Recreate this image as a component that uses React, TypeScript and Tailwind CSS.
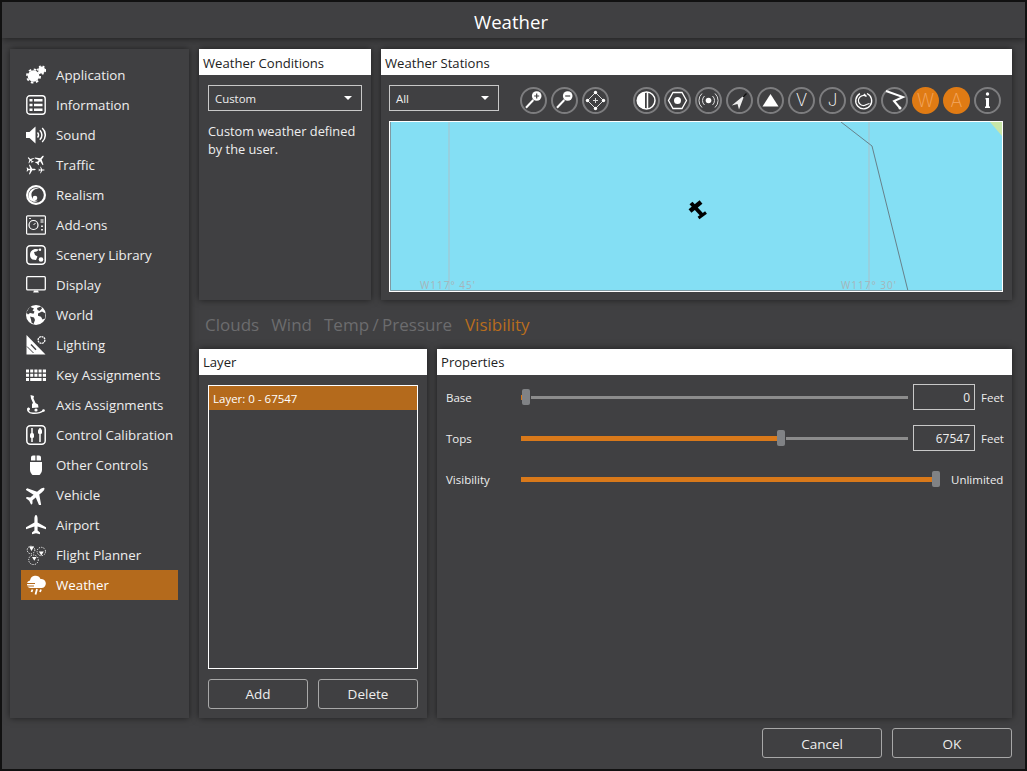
import type { ReactNode } from "react";

const PLANE =
  "M10 0C11 0 11.6 2 11.6 4V7.4L20 12.2V14.2L11.6 11.6V15.6L14 17.6V19.2L10 18.2L6 19.2V17.6L8.4 15.6V11.6L0 14.2V12.2L8.4 7.4V4C8.4 2 9 0 10 0Z";

function Svg({ children }: { children: ReactNode }) {
  return (
    <svg viewBox="0 0 20 20" className="h-5 w-5 shrink-0" fill="none" stroke="none">
      {children}
    </svg>
  );
}

function MiniPlane({ x, y, s, r }: { x: number; y: number; s: number; r: number }) {
  return <path d={PLANE} fill="#fff" transform={`translate(${x} ${y}) rotate(${r}) scale(${s}) translate(-10 -10)`} />;
}

const icons: Record<string, ReactNode> = {
  Application: (
    <Svg>
      <circle cx="7.5" cy="11" r="5.8" fill="#fff" />
      <circle cx="7.5" cy="11" r="6.6" stroke="#fff" strokeWidth="1.8" strokeDasharray="2.6 2.6" />
      <circle cx="15.6" cy="5" r="3.4" fill="#fff" />
      <circle cx="15.6" cy="5" r="3.9" stroke="#fff" strokeWidth="1.4" strokeDasharray="1.9 1.9" />
    </Svg>
  ),
  Information: (
    <Svg>
      <rect x="0.8" y="0.8" width="18.4" height="18.4" rx="3" stroke="#fff" strokeWidth="1.4" />
      <path d="M3.5 4h3v2.6h-3zM8 4h8.5v2.6H8zM3.5 8.7h3v2.6h-3zM8 8.7h8.5v2.6H8zM3.5 13.4h3V16h-3zM8 13.4h8.5V16H8z" fill="#fff" />
    </Svg>
  ),
  Sound: (
    <Svg>
      <path d="M0 7h3.5L9.5 1.5v17L3.5 13H0z" fill="#fff" />
      <path d="M11.5 7.5a3.5 3.5 0 0 1 0 5M13.8 5.2a6.5 6.5 0 0 1 0 9.6M16.2 3a9.5 9.5 0 0 1 0 14" stroke="#fff" strokeWidth="1.5" />
    </Svg>
  ),
  Traffic: (
    <Svg>
      <MiniPlane x={4.5} y={5} s={0.36} r={-45} />
      <MiniPlane x={14} y={5} s={0.55} r={40} />
      <MiniPlane x={5} y={14.5} s={0.48} r={90} />
      <MiniPlane x={15.5} y={15} s={0.32} r={90} />
    </Svg>
  ),
  Realism: (
    <Svg>
      <circle cx="10" cy="10" r="10" fill="#fff" />
      <circle cx="10" cy="10" r="7.8" fill="#404042" />
      <path d="M2.5 11c0-4.500 3.5-8 8-8 1 0 2 .2 2.8.6C8 3.5 5 7 5.5 10.5 6 14 9 16 12 15.800c-1 .7-2 1-3 1-3.500 0-6.500-2.500-6.500-5.800z" fill="#fff" />
      <circle cx="9" cy="13" r="2.3" fill="#fff" />
    </Svg>
  ),
  "Add-ons": (
    <Svg>
      <rect x="0.6" y="0.8" width="18.8" height="18.4" rx="1" stroke="#fff" strokeWidth="1.2" />
      <circle cx="7.5" cy="10" r="4.5" stroke="#fff" strokeWidth="1.2" />
      <path d="M7.5 10L9.5 8" stroke="#fff" />
      <path d="M14.5 4h3v4h-3z" fill="#aaa" />
      <path d="M15 10.500h2v1.500h-2zM15 14h2v1.500h-2zM3 3h2v1H3z" fill="#ddd" />
    </Svg>
  ),
  "Scenery Library": (
    <Svg>
      <rect x="0.8" y="0.8" width="18.4" height="18.4" rx="3.5" stroke="#fff" strokeWidth="1.5" />
      <path d="M4 10c0-3.500 2.500-6 6-6 1 0 2 .2 3 .8L10.500 6.500 8 7l1 3 2.500 1.500L10 15 6.500 14.500C5 13.500 4 12 4 10z" fill="#fff" />
      <circle cx="15" cy="14.5" r="2.3" fill="#fff" />
      <circle cx="14" cy="4.8" r="1.2" fill="#fff" />
    </Svg>
  ),
  Display: (
    <Svg>
      <rect x="0.7" y="1.7" width="18.6" height="13.2" rx="1" stroke="#fff" strokeWidth="1.3" />
      <path d="M8 15.500h4l.8 2H7.200z" fill="#fff" />
    </Svg>
  ),
  World: (
    <Svg>
      <circle cx="10" cy="10" r="10" fill="#fff" />
      <path d="M4 1.800L8 3.500 6.500 5.500 8.500 6.500 7.500 8.800 4 8 2 9.500.3 7.500zM11 3l4-1.500 1 2-2.500 2.500L11.500 5zM12 8.500l4-2 3.500 2-.5 5-2.500 1-1.500-2.800-3-1zM4 11.500l4 1 1 2.500-1.500 4-2-1.500-.5-3z" fill="#404042" />
    </Svg>
  ),
  Lighting: (
    <Svg>
      <circle cx="15.5" cy="5" r="3.4" stroke="#fff" strokeWidth="1.3" strokeDasharray="2 .6" />
      <path d="M0.5 0L19.5 19.5H0.5z" fill="#fff" />
      <path d="M5 9.500L10 14.800" stroke="#404042" strokeWidth="1.3" />
      <path d="M1 11.500L7.500 18" stroke="#404042" strokeWidth="1" />
    </Svg>
  ),
  "Key Assignments": (
    <Svg>
      <path d="M0 4.500h3v3H0zM4.200 4.500h3v3h-3zM8.400 4.500h3v3h-3zM12.600 4.500h3v3h-3zM16.800 4.500H20v3h-3.200zM0 8.700h3v3H0zM4.200 8.700h3v3h-3zM8.400 8.700h3v3h-3zM12.600 8.700h3v3h-3zM16.800 8.700H20v3h-3.200zM0 12.900h3v3H0zM4.200 12.900h11.400v3H4.200zM16.800 12.900H20v3h-3.200z" fill="#fff" />
    </Svg>
  ),
  "Axis Assignments": (
    <Svg>
      <path d="M4.500 0L8 1 7.500 3.500 9.500 8 12 9.500 12.500 12.500 6 13 6 9 7 8 5 3.500z" fill="#fff" />
      <path d="M3 13c-2 2-1 5 4 5.200 4 .2 8-.7 11-3" stroke="#fff" strokeWidth="1.4" />
      <circle cx="2.5" cy="14" r="1.5" fill="#fff" />
      <circle cx="17.5" cy="15.5" r="1.3" fill="#fff" />
      <circle cx="10" cy="15" r="1.6" fill="#fff" />
    </Svg>
  ),
  "Control Calibration": (
    <Svg>
      <rect x="0.8" y="0.8" width="18.4" height="18.4" rx="3.5" stroke="#fff" strokeWidth="1.5" />
      <path d="M6 3v14M14 3v14" stroke="#fff" strokeWidth="1.5" />
      <rect x="4" y="8" width="4" height="5" rx="1.5" fill="#fff" />
      <rect x="12" y="4" width="4" height="5" rx="1.5" fill="#fff" />
    </Svg>
  ),
  "Other Controls": (
    <Svg>
      <path d="M4 7h12v8a6 6 0 0 1-12 0z" fill="#fff" />
      <path d="M5 5.600V2.500A2 2 0 0 1 7 .5h2.400v5.100zM10.600 5.600V.5H13a2 2 0 0 1 2 2v3.100z" fill="#fff" />
    </Svg>
  ),
  Vehicle: (
    <Svg>
      <MiniPlane x={10} y={10} s={1.08} r={50} />
    </Svg>
  ),
  Airport: (
    <Svg>
      <path d={PLANE} fill="#fff" />
    </Svg>
  ),
  "Flight Planner": (
    <Svg>
      <circle cx="5" cy="5" r="3.8" stroke="#fff" strokeWidth="1" strokeDasharray="1.2 1.2" />
      <circle cx="15.3" cy="6.5" r="4.2" stroke="#fff" strokeWidth="1" strokeDasharray="1.2 1.2" />
      <circle cx="7.5" cy="14.8" r="4.8" stroke="#fff" strokeWidth="1" strokeDasharray="1.2 1.2" />
      <path d="M3 1.500h5L5.500 6zM12.800 6.500h5l-2.500 4zM6 12h4.600L8.300 15.800z" fill="#fff" />
    </Svg>
  ),
  Weather: (
    <Svg>
      <path d="M4.500 13a3.800 3.800 0 0 1-.5-7.500A5.500 5.500 0 0 1 14.500 4 4.500 4.500 0 0 1 16 13z" fill="#fff" />
      <path d="M0 8.500h9M1 11h7" stroke="#b46a1c" strokeWidth="1" />
      <path d="M6.500 14.500L5.500 17M11 14l-1.500 5.500M15 14.500l-1 2.500" stroke="#fff" strokeWidth="1.8" />
    </Svg>
  ),
};

const menu = Object.keys(icons);

function ToolCircle({ children, on }: { children?: ReactNode; on?: boolean }) {
  return (
    <div
      className={
        on
          ? "flex h-[27px] w-[27px] items-center justify-center rounded-full bg-[#e07b14] font-['Inter',sans-serif] text-[18px] leading-none font-extralight text-[#f3a862]"
          : "flex h-[27px] w-[27px] items-center justify-center rounded-full border-2 border-[#7d7d7f] font-['Inter',sans-serif] text-[17px] leading-none font-extralight text-white"
      }
    >
      {children}
    </div>
  );
}

function Glyph({ children }: { children: ReactNode }) {
  return (
    <svg viewBox="0 0 23 23" className="h-[23px] w-[23px]" fill="none">
      {children}
    </svg>
  );
}

function Panel({ title, titleClass, className, children }: { title: string; titleClass: string; className: string; children: ReactNode }) {
  return (
    <section className={`flex flex-col bg-[#404042] shadow-[0_0_7px_rgba(0,0,0,0.55)] ${className}`}>
      <h2 className={`flex h-[26px] shrink-0 items-center bg-white pl-1 text-[13.1px] font-normal text-[#222] ${titleClass}`}>{title}</h2>
      {children}
    </section>
  );
}

function Select({ label, className }: { label: string; className: string }) {
  return (
    <div className={`flex h-[26px] items-center justify-between border border-[#c8c8c8] pr-[9px] pl-[6px] text-[11.4px] text-[#eee] ${className}`}>
      <span className="pt-px">{label}</span>
      <span className="h-0 w-0 border-x-[4px] border-t-[4px] border-x-transparent border-t-white" />
    </div>
  );
}

function Thumb() {
  return <div className="h-[16px] w-[8px] shrink-0 rounded-[2px] bg-[#808285]" />;
}

function Slider({ fill, className }: { fill: string; className: string }) {
  return (
    <div className={`flex h-[16px] items-center ${className}`}>
      <div className={`h-[5px] bg-[#d9791a] ${fill}`} />
      <Thumb />
      <div className="ml-px h-[3px] flex-1 bg-[#8c8c8c]" />
    </div>
  );
}

function NumberBox({ value }: { value: string }) {
  return (
    <div className="ml-[5px] flex h-[26px] w-[62px] items-center justify-end border border-[#c8c8c8] pt-px pr-[4px] text-[12px] text-[#eee]">
      {value}
    </div>
  );
}

function WeatherMap() {
  return (
    <svg viewBox="0 0 612 169" fill="none" className="block h-[169px] w-[612px] bg-[#84dff4]">
      <path d="M59 0V169M479 0V169" stroke="#a9c2cb" strokeWidth="1" />
      <path d="M451 0L482 24 518 169" stroke="#67808a" strokeWidth="1" />
      <path d="M600 0H612V14z" fill="#c8e6a8" />
      <text x="30" y="167" fontSize="10" fill="#a5b5ba" letterSpacing="1">W117° 45'</text>
      <text x="451" y="167" fontSize="10" fill="#a5b5ba" letterSpacing="1">W117° 30'</text>
      <path d="M0.5 0V168.500H612" stroke="#7f9aa3" strokeWidth="1" />
      <path d="M311 80L300 89" stroke="#000" strokeWidth="4.500" />
      <path d="M301 81L312.500 93.500" stroke="#000" strokeWidth="4" />
      <path d="M316 90.500L308.500 96" stroke="#000" strokeWidth="3" />
    </svg>
  );
}

export default function App() {
  return (
    <div className="flex h-[771px] w-[1027px] flex-col overflow-hidden border-2 border-[#111] bg-[#404042] font-['Open_Sans',sans-serif] text-[#eee]">
      <header className="z-10 flex h-[36px] shrink-0 items-center justify-center bg-[#404042] pt-[3px] pr-[5px] text-[18.6px] text-white shadow-[0_1px_7px_rgba(0,0,0,0.55)]">
        Weather
      </header>

      <div className="flex gap-[10px] pt-[11px] pl-[8px]">
        <nav className="flex h-[669px] w-[179px] flex-col bg-[#404042] pt-[11px] pl-[11px] shadow-[0_0_7px_rgba(0,0,0,0.55)]">
          {menu.map((name) => (
            <div
              key={name}
              className={`flex h-[30px] w-[157px] items-center gap-[10px] pl-[5px] text-[13.3px] ${name === "Weather" ? "bg-[#b46a1c] text-white" : ""}`}
            >
              {icons[name]}
              <span className="pt-[2px]">{name}</span>
            </div>
          ))}
        </nav>

        <main className="flex w-[813px] flex-col">
          <div className="flex h-[251px] gap-[10px]">
            <Panel title="Weather Conditions" titleClass="pt-[3px]" className="w-[172px]">
              <div className="px-[9px] pt-[10px]">
                <Select label="Custom" className="w-[154px]" />
                <p className="mt-[11px] text-[12.8px] leading-[18px]">
                  Custom weather defined
                  <br />
                  by the user.
                </p>
              </div>
            </Panel>
            <Panel title="Weather Stations" titleClass="pt-[3px]" className="w-[631px]">
              <div className="flex items-start pt-[10px] pl-[8px]">
                <Select label="All" className="w-[110px]" />
                <div className="mt-[2px] ml-[21px] flex gap-[4px]">
                  <ToolCircle>
                    <Glyph>
                      <circle cx="14.7" cy="7" r="4.8" fill="#fff" />
                      <path d="M11.3 11L4 18.7" stroke="#fff" strokeWidth="2" />
                      <path d="M12.2 7h5M14.7 4.500v5" stroke="#404042" strokeWidth="1.2" />
                    </Glyph>
                  </ToolCircle>
                  <ToolCircle>
                    <Glyph>
                      <circle cx="14.7" cy="7" r="4.8" fill="#fff" />
                      <path d="M11.3 11L4 18.7" stroke="#fff" strokeWidth="2" />
                      <path d="M12.2 7h5" stroke="#404042" strokeWidth="1.2" />
                    </Glyph>
                  </ToolCircle>
                  <ToolCircle>
                    <Glyph>
                      <path d="M11.5 3.500L19.500 11.500 11.500 19.500 3.500 11.500z" stroke="#ddd" strokeWidth="1" />
                      <path d="M11.5 9v5M9 11.500h5" stroke="#ddd" strokeWidth="1" />
                      <circle cx="11.5" cy="3.5" r="1.7" fill="#fff" />
                      <circle cx="11.5" cy="19.5" r="1.7" fill="#fff" />
                      <circle cx="3.5" cy="11.5" r="1.7" fill="#fff" />
                      <circle cx="19.5" cy="11.5" r="1.7" fill="#fff" />
                    </Glyph>
                  </ToolCircle>
                </div>
                <div className="mt-[2px] ml-[24px] flex gap-[4px]">
                  <ToolCircle>
                    <Glyph>
                      <circle cx="11.5" cy="11.5" r="8.5" stroke="#fff" strokeWidth="1.5" />
                      <path d="M10 3a8.500 8.500 0 0 0 0 17z" fill="#fff" />
                      <path d="M12.5 3v17" stroke="#fff" strokeWidth="1.5" />
                    </Glyph>
                  </ToolCircle>
                  <ToolCircle>
                    <Glyph>
                      <path d="M7 3.500h9l4.500 8-4.500 8H7l-4.500-8z" stroke="#fff" strokeWidth="1.3" />
                      <circle cx="11.5" cy="11.5" r="3.5" fill="#fff" />
                    </Glyph>
                  </ToolCircle>
                  <ToolCircle>
                    <Glyph>
                      <circle cx="11.5" cy="11.5" r="2.8" fill="#fff" />
                      <path d="M7.500 7a6 6 0 0 0 0 9M15.500 7a6 6 0 0 1 0 9M5 4.500a9.500 9.500 0 0 0 0 14M18 4.500a9.500 9.500 0 0 1 0 14" stroke="#ddd" strokeWidth="1" />
                    </Glyph>
                  </ToolCircle>
                  <ToolCircle>
                    <Glyph>
                      <path d="M16.500 6L3.700 16.500 9.500 15 11 20.500z" fill="#eee" />
                      <path d="M15 8L18.500 4.500" stroke="#111" strokeWidth="1.5" />
                    </Glyph>
                  </ToolCircle>
                  <ToolCircle>
                    <Glyph>
                      <path d="M11.5 5L19.500 17.500H3.500z" fill="#fff" />
                    </Glyph>
                  </ToolCircle>
                  <ToolCircle>V</ToolCircle>
                  <ToolCircle>J</ToolCircle>
                  <ToolCircle>
                    <Glyph>
                      <path d="M15 4.500a8 8 0 1 1-7 .2" stroke="#fff" strokeWidth="1.3" />
                      <path d="M14.500 7.500a5 5 0 1 0 0 8M14.500 7.500L12 5M14.500 15.500l3-1" stroke="#fff" strokeWidth="1.3" />
                    </Glyph>
                  </ToolCircle>
                  <ToolCircle>
                    <Glyph>
                      <path d="M3 2L20 8 11 12 17 19" stroke="#fff" strokeWidth="2" />
                      <circle cx="17" cy="19" r="1.5" fill="#fff" />
                    </Glyph>
                  </ToolCircle>
                  <ToolCircle on>W</ToolCircle>
                  <ToolCircle on>A</ToolCircle>
                  <ToolCircle>
                    <Glyph>
                      <circle cx="11.5" cy="5" r="1.7" fill="#fff" />
                      <path d="M9.500 9h3.500v8.500h1v1.500H9v-1.500h1V10.500H9.500z" fill="#fff" />
                    </Glyph>
                  </ToolCircle>
                </div>
              </div>
              <div className="mt-[7px] ml-[8px] w-[614px] border border-white">
                <WeatherMap />
              </div>
            </Panel>
          </div>

          <div className="flex h-[49px] items-center gap-[12px] pt-px pl-[6px] text-[17px] text-[#6c6c6e]">
            <span>Clouds</span>
            <span>Wind</span>
            <span className="[word-spacing:-1px]">Temp / Pressure</span>
            <span className="ml-px text-[#b86d1d]">Visibility</span>
          </div>

          <div className="flex h-[369px] gap-[10px]">
            <Panel title="Layer" titleClass="pt-[2px]" className="w-[228px]">
              <div className="flex flex-1 flex-col px-[9px] pt-[10px]">
                <div className="h-[284px] border border-white">
                  <div className="flex h-[24px] items-center bg-[#b46a1c] pt-px pl-[4px] text-[11.5px] text-white">Layer: 0 - 67547</div>
                </div>
                <div className="mt-[10px] flex gap-[10px]">
                  <button className="h-[30px] w-[100px] rounded-[3px] border border-[#a8a8a8] text-[13.5px]">Add</button>
                  <button className="h-[30px] w-[100px] rounded-[3px] border border-[#a8a8a8] text-[13.5px]">Delete</button>
                </div>
              </div>
            </Panel>
            <Panel title="Properties" titleClass="pt-[2px]" className="w-[575px]">
              <div className="flex flex-col gap-[15px] pt-[9px] pl-[9px] text-[11.5px]">
                <div className="flex h-[26px] items-center">
                  <span className="w-[75px] pt-px">Base</span>
                  <Slider fill="w-px" className="w-[387px]" />
                  <NumberBox value="0" />
                  <span className="ml-[6px] pt-px">Feet</span>
                </div>
                <div className="flex h-[26px] items-center">
                  <span className="w-[75px] pt-px">Tops</span>
                  <Slider fill="w-[256px]" className="w-[387px]" />
                  <NumberBox value="67547" />
                  <span className="ml-[6px] pt-px">Feet</span>
                </div>
                <div className="flex h-[26px] items-center">
                  <span className="w-[75px] pt-px">Visibility</span>
                  <div className="flex h-[16px] w-[419px] items-center">
                    <div className="h-[5px] flex-1 bg-[#d9791a]" />
                    <Thumb />
                  </div>
                  <span className="ml-[11px] pt-px">Unlimited</span>
                </div>
              </div>
            </Panel>
          </div>
        </main>
      </div>

      <footer className="flex justify-end gap-[10px] pt-[10px] pr-[13px]">
        <button className="h-[30px] w-[120px] rounded-[3px] border border-[#a8a8a8] pt-[2px] text-[13.5px]">Cancel</button>
        <button className="h-[30px] w-[120px] rounded-[3px] border border-[#a8a8a8] pt-[2px] text-[13.5px]">OK</button>
      </footer>
    </div>
  );
}
